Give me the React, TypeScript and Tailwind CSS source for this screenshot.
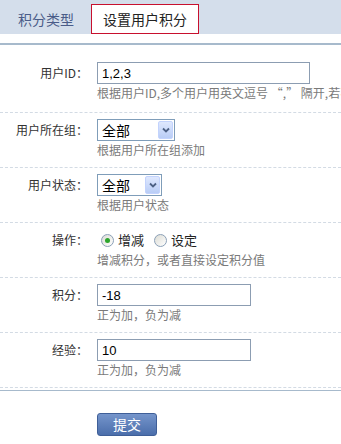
import React from 'react';

const font = { fontFamily: '"Noto Sans CJK SC", "Liberation Sans", sans-serif' };

const FakeSelect: React.FC<{ width: string }> = ({ width }) => (
  <div className={`${width} h-[22px] border border-[#7f9db9] bg-white flex items-center justify-between pl-[4px] pr-[1px]`}>
    <span className="text-[14px] leading-none text-black">全部</span>
    <span className="w-[15px] h-[18px] rounded-[2px] border border-[#c3d3fd] bg-gradient-to-b from-[#dfe8fe] to-[#b9cdf6] flex items-center justify-center">
      <svg width="8" height="6" viewBox="0 0 8 6">
        <path d="M1 1.5 L4 4.5 L7 1.5" fill="none" stroke="#4d6185" strokeWidth="1.8" />
      </svg>
    </span>
  </div>
);

const Radio: React.FC<{ checked?: boolean; label: string }> = ({ checked, label }) => (
  <label className="flex items-center gap-[4px]">
    <span className="w-[13px] h-[13px] rounded-full border border-[#8ba0b7] bg-gradient-to-br from-[#dcdcd5] to-white flex items-center justify-center">
      {checked && <span className="w-[5px] h-[5px] rounded-full bg-[#2ca52c]" />}
    </span>
    <span className="text-[13px] text-[#222]">{label}</span>
  </label>
);

const Row: React.FC<{ label: string; help: string; first?: boolean; children: React.ReactNode }> = ({ label, help, first, children }) => (
  <div className={`flex border-b border-dashed border-[#d3dbe4] ${first ? 'pt-[17px] pb-[10px]' : 'pt-[6px] pb-[8px]'}`}>
    <div className="w-[88px] shrink-0 h-[22px] flex items-center justify-end text-[12px] text-[#333]">{label}</div>
    <div className="ml-[9px] flex flex-col">
      {children}
      <div className="text-[12px] leading-[18px] text-[#7a7a7a] whitespace-nowrap">{help}</div>
    </div>
  </div>
);

const inputCls = 'h-[22px] border border-[#8c9db2] px-[4px] text-[13px] text-black outline-none';
const numFont = { fontFamily: '"Liberation Sans", Arial, sans-serif' };

const App: React.FC = () => {
  return (
    <div className="w-[341px] h-[444px] overflow-hidden bg-white" style={font}>
      {/* tabs */}
      <div className="h-[34px] bg-[#d4deeb] flex items-end pl-[7px] gap-[6px]">
        <div className="h-[30px] px-[11px] flex items-center text-[14px] text-[#4a5c88]">积分类型</div>
        <div className="h-[30px] px-[11px] flex items-center text-[14px] text-[#222] bg-white border border-[#c8102e]">设置用户积分</div>
      </div>
      <div className="h-[9px]" />
      <div className="h-[2px] bg-[#a7bacc]" />

      <div>
        <Row first label="用户ID：" help="根据用户ID,多个用户用英文逗号 “,” 隔开,若不填写则按用户组和状态筛选">
          <input className={`${inputCls} w-[213px]`} style={numFont} defaultValue="1,2,3" />
        </Row>
        <Row label="用户所在组：" help="根据用户所在组添加">
          <FakeSelect width="w-[78px]" />
        </Row>
        <Row label="用户状态：" help="根据用户状态">
          <FakeSelect width="w-[65px]" />
        </Row>
        <Row label="操作：" help="增减积分，或者直接设定积分值">
          <div className="h-[22px] flex items-center gap-[10px] pl-[4px]">
            <Radio checked label="增减" />
            <Radio label="设定" />
          </div>
        </Row>
        <Row label="积分：" help="正为加，负为减">
          <input className={`${inputCls} w-[154px]`} style={numFont} defaultValue="-18" />
        </Row>
        <Row label="经验：" help="正为加，负为减">
          <input className={`${inputCls} w-[154px]`} style={numFont} defaultValue="10" />
        </Row>
      </div>
      <div className="h-[2px]" />
      <div className="h-[1px] bg-[#a7bacc]" />

      <div className="pl-[97px] pt-[20px]">
        <button className="w-[60px] h-[23px] rounded-[3px] border border-[#3f5f98] bg-gradient-to-b from-[#7595cb] to-[#4b6eab] text-white text-[14px] leading-none">
          提交
        </button>
      </div>
    </div>
  );
};

export default App;
